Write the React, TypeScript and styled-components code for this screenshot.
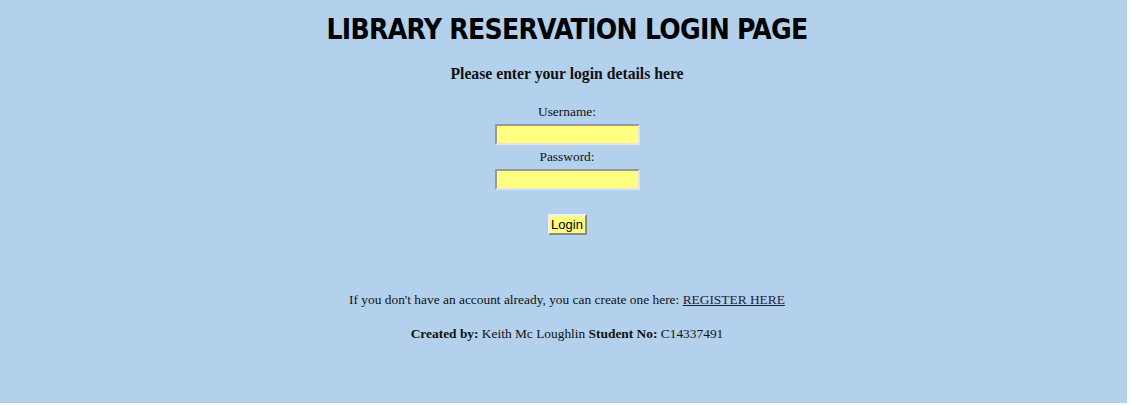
import React from "react";
import styled, { createGlobalStyle } from "styled-components";

const Global = createGlobalStyle`
  html, body { margin: 0; padding: 0; background: #ffffff; }
`;

const Page = styled.div`
  box-sizing: border-box;
  width: 1127px;
  height: 403px;
  padding-left: 7px;
  background: #b3d1ed;
  display: flex;
  flex-direction: column;
  align-items: center;
  font-family: "Liberation Serif", "Times New Roman", serif;
  color: #111;
`;

const Title = styled.h1`
  margin: 14px 0 0;
  font-family: "Comic Sans MS", "DejaVu Sans Condensed", "DejaVu Sans", sans-serif;
  font-stretch: condensed;
  font-weight: bold;
  font-size: 28px;
  line-height: 32px;
  letter-spacing: -0.7px;
  color: #000;
`;

const Subtitle = styled.h3`
  margin: 18px 0 0;
  font-size: 15.7px;
  line-height: 20px;
  font-weight: bold;
`;

const Form = styled.form`
  display: flex;
  flex-direction: column;
  align-items: center;
  margin-top: 19px;
`;

const Label = styled.label`
  font-size: 13.4px;
  line-height: 18px;
  display: block;
`;

const Input = styled.input`
  box-sizing: border-box;
  width: 145px;
  height: 21px;
  margin: 3px 0 3px;
  background: #ffff80;
  border: 2px solid;
  border-color: #9a9a9a #e2e2e2 #e2e2e2 #9a9a9a;
  padding: 0 2px;
  outline: none;
`;

const Button = styled.button`
  box-sizing: border-box;
  margin-top: 21px;
  width: 39px;
  height: 21px;
  padding: 0;
  background: #ffff80;
  border: 2px solid;
  border-color: #f0f0f0 #8a8a8a #8a8a8a #f0f0f0;
  font-family: "Liberation Sans", Arial, sans-serif;
  font-size: 13px;
  color: #000;
`;

const Line = styled.p<{ $top: number }>`
  margin: ${(p) => p.$top}px 0 0;
  font-size: 13.4px;
  line-height: 18px;
`;

const Link = styled.a`
  color: #1c2040;
  text-decoration: underline;
`;

export default function App() {
  return (
    <>
      <Global />
      <Page>
        <Title>LIBRARY RESERVATION LOGIN PAGE</Title>
        <Subtitle>Please enter your login details here</Subtitle>
        <Form onSubmit={(e) => e.preventDefault()}>
          <Label htmlFor="u">Username:</Label>
          <Input id="u" type="text" />
          <Label htmlFor="p">Password:</Label>
          <Input id="p" type="password" />
          <Button type="submit">Login</Button>
        </Form>
        <Line $top={56}>
          If you don't have an account already, you can create one here:{" "}
          <Link href="#">REGISTER HERE</Link>
        </Line>
        <Line $top={16}>
          <b>Created by:</b> Keith Mc Loughlin <b>Student No:</b> C14337491
        </Line>
      </Page>
    </>
  );
}
